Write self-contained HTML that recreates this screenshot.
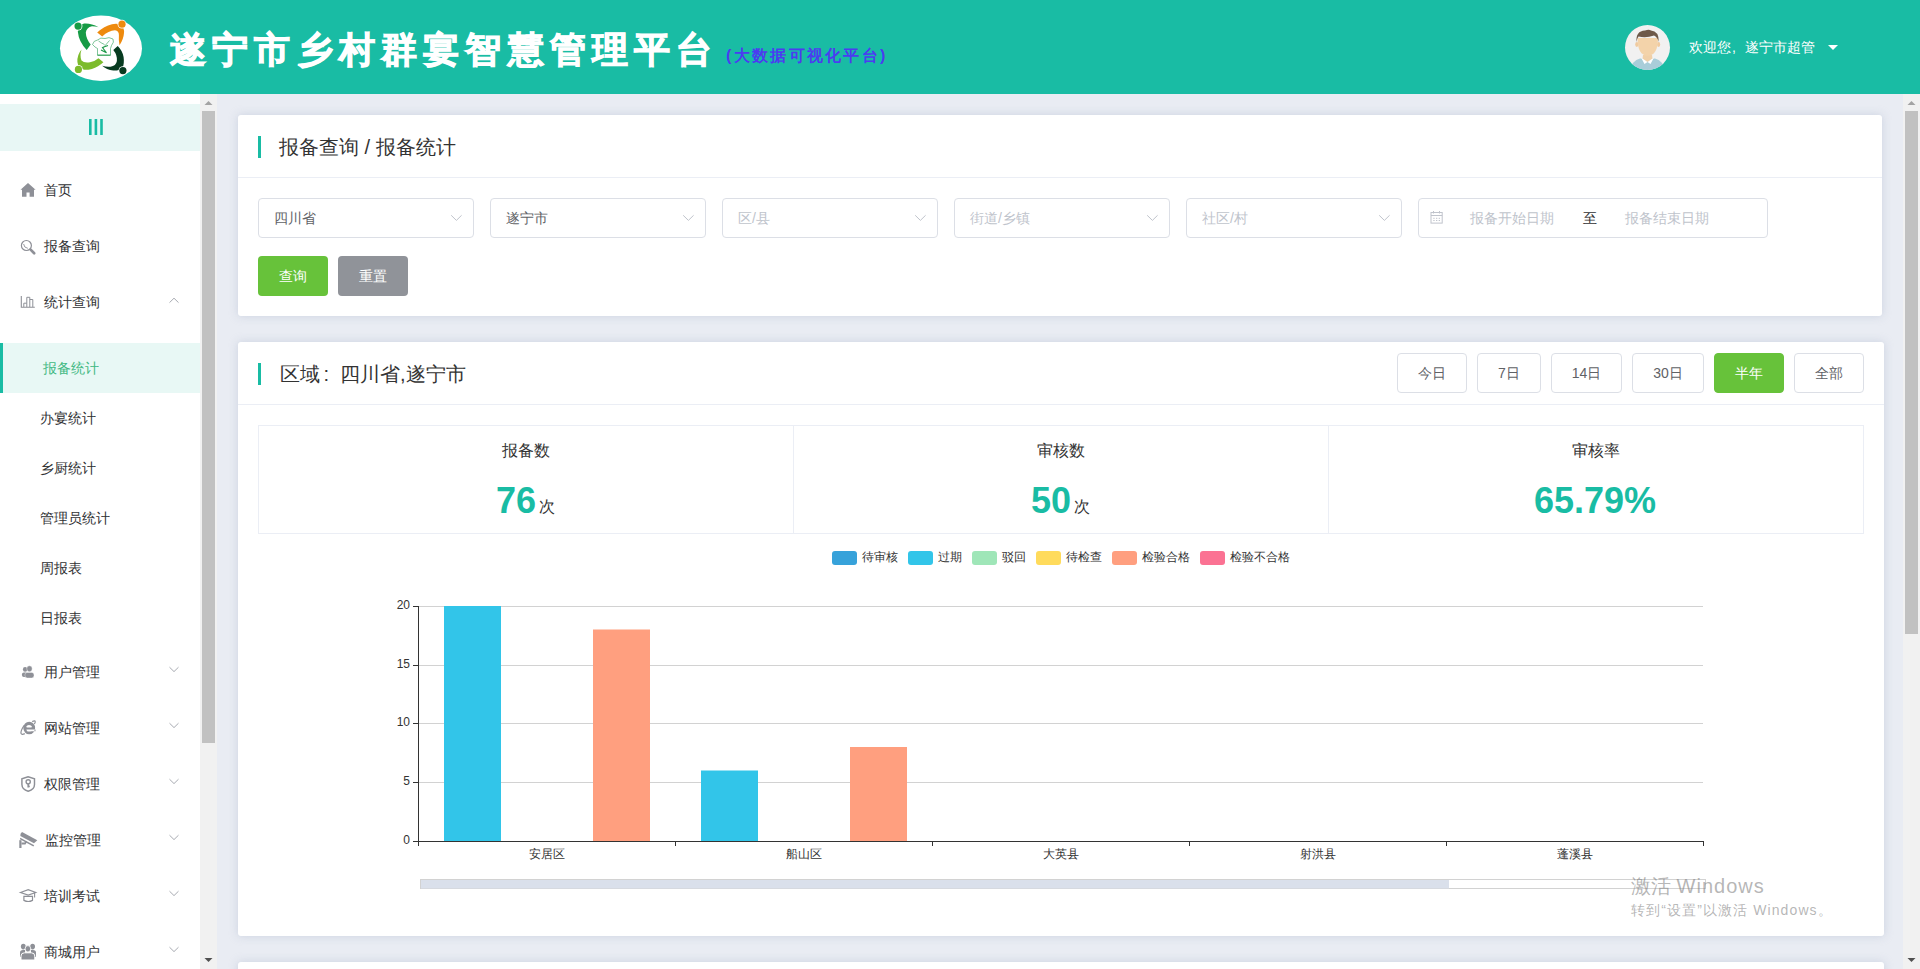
<!DOCTYPE html>
<html><head><meta charset="utf-8">
<style>
*{box-sizing:border-box;margin:0;padding:0}
html,body{width:1920px;height:969px;overflow:hidden}
body{position:relative;background:#e9ecf3;font-family:"Liberation Sans",sans-serif;color:#303133}
.a{position:absolute;white-space:nowrap}
#hdr{left:0;top:0;width:1920px;height:94px;background:#19bca4}
.card{position:absolute;background:#fff;border-radius:3px;box-shadow:0 0 10px rgba(190,198,215,.7)}
.sel{position:absolute;top:198px;width:216px;height:40px;border:1px solid #dcdfe6;border-radius:4px;font-size:14px;line-height:38px;padding-left:15px;color:#c0c4cc;background:#fff}
.sel .chev{position:absolute;right:12px;top:14px;width:8px;height:8px;border-right:1px solid #b4b8bf;border-bottom:1px solid #b4b8bf;transform:rotate(45deg)}
.btn{position:absolute;height:40px;border-radius:4px;font-size:14px;line-height:40px;text-align:center}
.tb{position:absolute;top:353px;height:40px;border:1px solid #dcdfe6;border-radius:4px;font-size:14px;line-height:38px;text-align:center;color:#606266;background:#fff}
.mi{position:absolute;left:44px;font-size:14px;line-height:20px;color:#303133}
.sub{position:absolute;left:40px;font-size:14px;line-height:20px;color:#303133}
.chd{position:absolute;left:171px;width:6px;height:6px;border-right:1px solid #999;border-bottom:1px solid #999;transform:rotate(45deg)}
.ic{position:absolute;left:20px}
</style></head><body>

<!-- HEADER -->
<div id="hdr" class="a">
  <svg class="a" style="left:0;top:0" width="160" height="94" viewBox="0 0 160 94">
  <ellipse cx="101" cy="48.3" rx="41" ry="32.8" fill="#fff"/>
  <path d="M98.5,27.3 Q91,23 84,23.6 Q79.5,25 77.8,31.5 Q78.8,42 86.7,49.9 L90.7,44.6 Q86,38.5 85.8,32.5 Q86.5,27.5 92,26.3 Q95.5,26.3 98.5,27.3 Z" fill="#169b45"/>
  <circle cx="78.05" cy="26.05" r="4.4" fill="#fff"/><circle cx="78.05" cy="26.05" r="3.6" fill="#169b45"/>
  <path d="M97.2,32.6 Q104,26 112,24.2 Q118,23.2 121,25 Q124.5,28 124,33 Q123.5,39.5 119.5,45.2 Q118.5,40 118.9,35 Q119,31 115,30.3 Q108.5,30.5 102.2,36.6 Z" fill="#ee8a0e"/>
  <circle cx="122" cy="24.2" r="4.4" fill="#fff"/><circle cx="122" cy="24.2" r="3.6" fill="#ee8a0e"/>
  <path d="M81.5,49.6 Q77,55 77.4,62 Q78,68 84.2,69.8 Q92,70 98,66.2 Q101,64.5 103.4,62.3 L98.5,58.2 Q94.5,61.5 90,62.3 Q84,63.3 81.5,60.5 Q79.5,56 81.5,49.6 Z" fill="#7cbb2c"/>
  <circle cx="78.4" cy="69.4" r="4.4" fill="#fff"/><circle cx="78.4" cy="69.4" r="3.6" fill="#7cbb2c"/>
  <path d="M113.3,49.9 L117.7,45.9 Q122.5,50.5 123.6,57 Q124.5,63.5 122.5,68 Q119.5,70.8 113.3,70.6 Q106.5,69.5 102.2,65.7 Q106.5,67.2 110.5,66.7 Q116,66 116.9,61 Q117.5,55 113.3,49.9 Z" fill="#073b20"/>
  <circle cx="122.9" cy="70.6" r="4.4" fill="#fff"/><circle cx="122.9" cy="70.6" r="3.6" fill="#073b20"/>
  <g fill="none" stroke="#2a9d55" stroke-width="0.6">
   <path d="M92.5,44.5 Q93.5,40.5 97.5,40 Q100.5,37 105,38.5 Q109,36.5 113,39 Q114.5,42 111.5,45.5 L110.5,48.5 L110.5,55.2 L97.5,55.2 L97.5,48.5 Q95,47.5 92.5,44.5 Z"/>
   <path d="M98.5,41 Q102,43.5 104.5,44.5 M109.5,40.5 Q106.5,44 103,48"/>
  </g>
  <path d="M101,50 L106.5,52.8 L102.5,47.5 L108,45.5" fill="none" stroke="#1f9a4a" stroke-width="1.1"/>
  <path d="M97.5,55.2 L110.5,55.2" stroke="#1f9a4a" stroke-width="0.9"/>
</svg>
  <div class="a" style="left:170px;top:25px;font-size:36px;line-height:50px;font-weight:bold;color:#fff;letter-spacing:6.2px;-webkit-text-stroke:1px #fff">遂宁市乡村群宴智慧管理平台</div>
  <div class="a" style="left:726px;top:44px;font-size:16px;line-height:24px;color:#4b3cf0;letter-spacing:2.3px;font-weight:bold">(大数据可视化平台)</div>
  <svg class="a" style="left:1620px;top:20px" width="56" height="56" viewBox="1620 20 56 56">
  <defs><clipPath id="avc"><circle cx="1647.5" cy="47.5" r="22.5"/></clipPath></defs>
  <circle cx="1647.5" cy="47.5" r="22.5" fill="#f1f1f1"/>
  <g clip-path="url(#avc)">
   <path d="M1630,72 Q1631,61 1640,58.5 L1655,58.5 Q1664,61 1665,72 Z" fill="#a9cdd9"/>
   <path d="M1643,55 L1652,55 L1652.5,59 L1647.5,62 L1642.5,59 Z" fill="#f0d0a8"/>
   <path d="M1641,57.5 L1647.5,62 L1644.5,64 Z M1654,57.5 L1647.5,62 L1650.5,64 Z" fill="#fff"/>
   <ellipse cx="1636.8" cy="44.5" rx="1.6" ry="2.4" fill="#f0cba0"/>
   <ellipse cx="1658.6" cy="44.5" rx="1.6" ry="2.4" fill="#f0cba0"/>
   <path d="M1637.5,38 Q1637.5,55.5 1647.7,55.8 Q1658,55.5 1658,38 Z" fill="#f3d3aa"/>
   <path d="M1636.5,42 Q1635.5,31 1645,30.5 Q1649,29 1651,30.5 Q1659,31 1658.8,42 Q1657.5,37 1654,35.5 Q1646,38.5 1638.5,36.5 Q1637,38.5 1636.5,42 Z" fill="#6e5949"/>
  </g>
</svg>
  <div class="a" style="left:1689px;top:37px;font-size:14px;line-height:20px;color:#fff">欢迎您<span style="display:inline-block;width:14px;padding-left:1px">,</span>遂宁市超管</div>
  <div class="a" style="left:1828px;top:45px;width:0;height:0;border-left:5px solid transparent;border-right:5px solid transparent;border-top:5px solid #fff"></div>
</div>

<!-- SIDEBAR -->
<div class="a" style="left:0;top:94px;width:200px;height:875px;background:#fff">
  <div class="a" style="left:0;top:10px;width:200px;height:47px;background:#e8f7f5"></div>
</div>
<div class="a" style="left:0;top:0;width:200px;height:969px">
  <div class="mi" style="top:180px">首页</div>
  <div class="mi" style="top:236px">报备查询</div>
  <div class="mi" style="top:292px">统计查询</div>
  <div class="a" style="left:0;top:343px;width:200px;height:50px;background:#e8f8f5;border-left:3px solid #19bca4"></div>
  <div class="sub" style="top:358px;left:43px;color:#42b983">报备统计</div>
  <div class="sub" style="top:408px">办宴统计</div>
  <div class="sub" style="top:458px">乡厨统计</div>
  <div class="sub" style="top:508px">管理员统计</div>
  <div class="sub" style="top:558px">周报表</div>
  <div class="sub" style="top:608px">日报表</div>
  <div class="mi" style="top:662px">用户管理</div>
  <div class="mi" style="top:718px">网站管理</div>
  <div class="mi" style="top:774px">权限管理</div>
  <div class="mi" style="top:830px;left:45px">监控管理</div>
  <div class="mi" style="top:886px">培训考试</div>
  <div class="mi" style="top:942px">商城用户</div>
</div>

<!-- SCROLLBARS -->
<div class="a" style="left:200px;top:94px;width:17px;height:875px;background:#f1f1f1">
  <div class="a" style="left:2px;top:17px;width:13px;height:632px;background:#c1c1c1"></div>
</div>
<div class="a" style="left:1903px;top:94px;width:17px;height:875px;background:#f1f1f1">
  <div class="a" style="left:2px;top:17px;width:13px;height:523px;background:#c1c1c1"></div>
</div>


<!-- SIDEBAR ICONS -->
<svg class="a" style="left:0;top:0" width="220" height="969" viewBox="0 0 220 969">
 <g fill="#19bca4"><rect x="89" y="119" width="2.6" height="16"/><rect x="94.6" y="119" width="2.6" height="16"/><rect x="100.2" y="119" width="2.6" height="16"/></g>
 <g fill="#8e9097">
  <!-- home -->
  <path d="M28,183 L20.5,189.7 L22,189.7 L22,196.8 L26.5,196.8 L26.5,192.6 L29.6,192.6 L29.6,196.8 L34,196.8 L34,189.7 L35.6,189.7 Z"/>
  <!-- user -->
  <ellipse cx="25.1" cy="669.4" rx="2.2" ry="2.4"/><rect x="21.9" y="672.4" width="6" height="4.6" rx="2"/>
  <ellipse cx="29.45" cy="668.8" rx="2.7" ry="3" stroke="#fff" stroke-width="0.4"/><rect x="25" y="672.4" width="9" height="5.6" rx="2.3" stroke="#fff" stroke-width="0.4"/>
  <!-- camera -->
  <path d="M22,832 L37.3,840.3 L34,843.3 L20.4,836 Q19.9,833.6 22,832 Z"/>
  <path d="M20.3,837.7 L34.2,845.2 L33.4,846.6 L19.9,839.2 Z"/>
  <rect x="19.3" y="840.2" width="2.2" height="7.8"/>
  <path d="M21.5,842.5 L24.6,842.5 L25.6,840.9 L27.1,841.7 L25.5,844.5 L21.5,844.5 Z"/>
  <!-- users -->
  <ellipse cx="23.3" cy="946.6" rx="2.4" ry="2.8"/><ellipse cx="32.6" cy="946.6" rx="2.4" ry="2.8"/>
  <path d="M20,957 L20,952.5 Q20,950 23,950 L25,950 L25,957 Z"/><path d="M31,950 L33,950 Q36,950 36,952.5 L36,957 L31,957 Z"/>
  <ellipse cx="27.9" cy="948.8" rx="2.8" ry="3.2" stroke="#fff" stroke-width="0.8"/>
  <path d="M21,960 L21,956 Q21,952.8 24.5,952.8 L31.3,952.8 Q34.8,952.8 34.8,956 L34.8,960 Z" stroke="#fff" stroke-width="1"/>
 </g>
 <g fill="none" stroke="#8e9097">
  <!-- search -->
  <circle cx="26.4" cy="245.5" r="5" stroke-width="1.2"/>
  <path d="M30.6,249.6 L34.2,253.2" stroke-width="2.7" stroke-linecap="round"/>
  <path d="M23.6,244 Q24,247.9 27.8,248.3" stroke-width="0.9"/>
  <!-- bar chart -->
  <path d="M21.3,296 L21.3,307.3 L34.8,307.3" stroke-width="1.1"/>
  <path d="M23.8,307 L23.8,303.2 L26.8,303.2 L26.8,307 M26.8,303.2 L26.8,297.3 L29.8,297.3 L29.8,307 M29.8,299.5 L32.8,299.5 L32.8,307" stroke-width="1"/>
  <!-- shield -->
  <path d="M28.2,776.8 L21.9,778.8 L21.9,784.5 Q22,789.5 28.2,791.3 Q34.5,789.5 34.5,784.5 L34.5,778.8 Z" stroke-width="1.45"/>
  <circle cx="28.2" cy="781.8" r="2.1" stroke-width="1.4"/>
  <path d="M28.2,783.8 L28.2,787.6 M28.2,786.4 L29.8,786.4" stroke-width="1.6"/>
  <!-- cap -->
  <path d="M20.5,892.5 L28.2,889.7 L35.7,892.5 L28.2,895 Z" stroke-width="1.2"/>
  <path d="M23.9,896.4 L23.9,900.4 Q28.2,902.6 32.5,900.4 L32.5,896.4 Z" stroke-width="1.2"/>
  <path d="M34.6,892.8 L34.6,897.4" stroke-width="1.1"/>
  <!-- chevrons -->
  <path d="M169.5,302.6 L174,298.2 L178.5,302.6" stroke="#a8abb2" stroke-width="1"/>
  <path d="M169.5,667.2 L174,671.6 L178.5,667.2" stroke="#a8abb2" stroke-width="1"/>
  <path d="M169.5,723.2 L174,727.6 L178.5,723.2" stroke="#a8abb2" stroke-width="1"/>
  <path d="M169.5,779.2 L174,783.6 L178.5,779.2" stroke="#a8abb2" stroke-width="1"/>
  <path d="M169.5,835.2 L174,839.6 L178.5,835.2" stroke="#a8abb2" stroke-width="1"/>
  <path d="M169.5,891.2 L174,895.6 L178.5,891.2" stroke="#a8abb2" stroke-width="1"/>
  <path d="M169.5,947.2 L174,951.6 L178.5,947.2" stroke="#a8abb2" stroke-width="1"/>
 </g>
 <!-- IE -->
 <path fill="#8e9097" fill-rule="evenodd" d="M23.3,728 a5.9,6.3 0 1,0 11.8,0 a5.9,6.3 0 1,0 -11.8,0 Z M26.3,726.6 Q26.8,725 29,725 Q31.5,725 31.9,726.6 Q31.9,727.4 31.4,727.4 L26.8,727.4 Q26.3,727.4 26.3,726.6 Z M26.4,729.6 L35.5,729.6 L35.5,731.2 L31.8,731.2 Q29,731.8 27.6,731.4 Q26.4,730.8 26.4,729.6 Z"/>
 <g fill="none" stroke="#8e9097" stroke-width="1.2">
  <path d="M32.2,721.6 Q35.5,720 35.2,722.2 Q35,723.2 34.3,724"/>
  <path d="M24,725.5 Q20.8,730.5 20.9,733.2 Q21.5,735.3 24.8,733.6"/>
 </g>
 <!-- scrollbar arrows -->
 <path d="M204.5,105 L208.5,101 L212.5,105 Z" fill="#a3a3a3"/>
 <path d="M204.5,958 L208.5,962 L212.5,958 Z" fill="#505050"/>
</svg>
<svg class="a" style="left:1903px;top:0" width="17" height="969" viewBox="1903 0 17 969">
 <path d="M1907.5,105 L1911.5,101 L1915.5,105 Z" fill="#a3a3a3"/>
 <path d="M1907.5,958 L1911.5,962 L1915.5,958 Z" fill="#505050"/>
</svg>

<!-- CARD 1 -->
<div class="card" style="left:238px;top:115px;width:1644px;height:201px"></div>
<div class="a" style="left:258px;top:136px;width:3px;height:22px;background:#19bca4"></div>
<div class="a" style="left:279px;top:135px;font-size:20px;line-height:24px;color:#333">报备查询 / 报备统计</div>
<div class="a" style="left:238px;top:177px;width:1644px;height:1px;background:#ebeef5"></div>
<div class="sel" style="left:258px;color:#606266">四川省</div>
<div class="sel" style="left:490px;color:#606266">遂宁市</div>
<div class="sel" style="left:722px">区/县</div>
<div class="sel" style="left:954px">街道/乡镇</div>
<div class="sel" style="left:1186px">社区/村</div>
<div class="sel" style="left:1418px;width:350px;padding:0"></div>
<div class="a" style="left:1470px;top:208px;font-size:14px;line-height:20px;color:#c0c4cc">报备开始日期</div>
<div class="a" style="left:1583px;top:208px;font-size:14px;line-height:20px;color:#303133">至</div>
<div class="a" style="left:1625px;top:208px;font-size:14px;line-height:20px;color:#c0c4cc">报备结束日期</div>
<svg class="a" style="left:0;top:0" width="1920" height="300" viewBox="0 0 1920 300">
 <g fill="none" stroke="#c0c4cc" stroke-width="1"><path d="M451.2,215.3 L456.4,220.4 L461.6,215.3"/><path d="M683.2,215.3 L688.4,220.4 L693.6,215.3"/><path d="M915.2,215.3 L920.4,220.4 L925.6,215.3"/><path d="M1147.2,215.3 L1152.4,220.4 L1157.6,215.3"/><path d="M1379.2,215.3 L1384.4,220.4 L1389.6,215.3"/></g>
 <g fill="none" stroke="#c0c4cc" stroke-width="1">
  <rect x="1431" y="212.5" width="11.2" height="10.6"/>
  <line x1="1431" y1="215.5" x2="1442.2" y2="215.5"/>
  <line x1="1433.5" y1="211" x2="1433.5" y2="213.5"/>
  <line x1="1439.5" y1="211" x2="1439.5" y2="213.5"/>
 </g>
 <g fill="#c0c4cc">
  <rect x="1433.3" y="217.8" width="1.3" height="1"/><rect x="1436" y="217.8" width="1.3" height="1"/><rect x="1438.7" y="217.8" width="1.3" height="1"/>
  <rect x="1433.3" y="220" width="1.3" height="1"/><rect x="1436" y="220" width="1.3" height="1"/><rect x="1438.7" y="220" width="1.3" height="1"/>
 </g>
</svg>
<div class="btn" style="left:258px;top:256px;width:70px;background:#67c23a;color:#fff">查询</div>
<div class="btn" style="left:338px;top:256px;width:70px;background:#909399;color:#fff">重置</div>

<!-- CARD 2 -->
<div class="card" style="left:238px;top:342px;width:1646px;height:594px"></div>
<div class="a" style="left:258px;top:363px;width:3px;height:22px;background:#19bca4"></div>
<div class="a" style="left:280px;top:362px;font-size:20px;line-height:24px;color:#333">区域<span style="display:inline-block;width:20px;padding-left:3.5px">:</span>四川省,遂宁市</div>
<div class="a" style="left:238px;top:404px;width:1646px;height:1px;background:#ebeef5"></div>
<div class="tb" style="left:1397px;width:70px">今日</div>
<div class="tb" style="left:1477px;width:64px">7日</div>
<div class="tb" style="left:1551px;width:71px">14日</div>
<div class="tb" style="left:1632px;width:72px">30日</div>
<div class="tb" style="left:1714px;width:70px;background:#67c23a;border-color:#67c23a;color:#fff">半年</div>
<div class="tb" style="left:1794px;width:70px">全部</div>

<div class="a" style="left:258px;top:425px;width:1606px;height:109px;border:1px solid #ebeef5"></div>
<div class="a" style="left:793px;top:425px;width:1px;height:109px;background:#ebeef5"></div>
<div class="a" style="left:1328px;top:425px;width:1px;height:109px;background:#ebeef5"></div>


<!-- STATS -->
<div class="a" style="left:502px;top:440px;font-size:16px;line-height:22px;color:#333">报备数</div>
<div class="a" style="left:496px;top:481px;font-size:36px;line-height:40px;font-weight:bold;color:#19bca4">76</div>
<div class="a" style="left:539px;top:496px;font-size:16px;line-height:22px;color:#333">次</div>
<div class="a" style="left:1037px;top:440px;font-size:16px;line-height:22px;color:#333">审核数</div>
<div class="a" style="left:1031px;top:481px;font-size:36px;line-height:40px;font-weight:bold;color:#19bca4">50</div>
<div class="a" style="left:1074px;top:496px;font-size:16px;line-height:22px;color:#333">次</div>
<div class="a" style="left:1572px;top:440px;font-size:16px;line-height:22px;color:#333">审核率</div>
<div class="a" style="left:1534px;top:481px;font-size:36px;line-height:40px;font-weight:bold;color:#19bca4">65.79%</div>

<!-- LEGEND -->
<div class="a" style="left:832px;top:551px;width:25px;height:14px;border-radius:3px;background:#37a2da"></div>
<div class="a" style="left:862px;top:549px;font-size:12px;line-height:16px;color:#333">待审核</div>
<div class="a" style="left:908px;top:551px;width:25px;height:14px;border-radius:3px;background:#32c5e9"></div>
<div class="a" style="left:938px;top:549px;font-size:12px;line-height:16px;color:#333">过期</div>
<div class="a" style="left:972px;top:551px;width:25px;height:14px;border-radius:3px;background:#9fe6b8"></div>
<div class="a" style="left:1002px;top:549px;font-size:12px;line-height:16px;color:#333">驳回</div>
<div class="a" style="left:1036px;top:551px;width:25px;height:14px;border-radius:3px;background:#ffdb5c"></div>
<div class="a" style="left:1066px;top:549px;font-size:12px;line-height:16px;color:#333">待检查</div>
<div class="a" style="left:1112px;top:551px;width:25px;height:14px;border-radius:3px;background:#ff9f7f"></div>
<div class="a" style="left:1142px;top:549px;font-size:12px;line-height:16px;color:#333">检验合格</div>
<div class="a" style="left:1200px;top:551px;width:25px;height:14px;border-radius:3px;background:#fb7293"></div>
<div class="a" style="left:1230px;top:549px;font-size:12px;line-height:16px;color:#333">检验不合格</div>

<!-- CHART -->
<svg class="a" style="left:0;top:0" width="1920" height="969" viewBox="0 0 1920 969">
 <g stroke="#d2d2d2" stroke-width="1">
  <line x1="418" y1="606.5" x2="1703" y2="606.5"/>
  <line x1="418" y1="665.5" x2="1703" y2="665.5"/>
  <line x1="418" y1="723.5" x2="1703" y2="723.5"/>
  <line x1="418" y1="782.5" x2="1703" y2="782.5"/>
 </g>
 <rect x="444" y="606" width="57" height="235" fill="#32c5e9"/>
 <rect x="593" y="629.5" width="57" height="211.5" fill="#ff9f7f"/>
 <rect x="701" y="770.5" width="57" height="70.5" fill="#32c5e9"/>
 <rect x="850" y="747" width="57" height="94" fill="#ff9f7f"/>
 <g stroke="#333" stroke-width="1" fill="none">
  <line x1="418.5" y1="606" x2="418.5" y2="841"/>
  <line x1="413" y1="606.5" x2="418" y2="606.5"/>
  <line x1="413" y1="665.5" x2="418" y2="665.5"/>
  <line x1="413" y1="723.5" x2="418" y2="723.5"/>
  <line x1="413" y1="782.5" x2="418" y2="782.5"/>
  <line x1="413" y1="841.5" x2="1703" y2="841.5"/>
  <line x1="418.5" y1="841" x2="418.5" y2="846"/>
  <line x1="675.5" y1="841" x2="675.5" y2="846"/>
  <line x1="932.5" y1="841" x2="932.5" y2="846"/>
  <line x1="1189.5" y1="841" x2="1189.5" y2="846"/>
  <line x1="1446.5" y1="841" x2="1446.5" y2="846"/>
  <line x1="1703.5" y1="841" x2="1703.5" y2="846"/>
 </g>
 <g font-family="Liberation Sans, sans-serif" font-size="12" fill="#333" text-anchor="end">
  <text x="410" y="609">20</text>
  <text x="410" y="668">15</text>
  <text x="410" y="726">10</text>
  <text x="410" y="785">5</text>
  <text x="410" y="844">0</text>
 </g>
 <g font-family="Liberation Sans, sans-serif" font-size="12" fill="#333" text-anchor="middle">
  <text x="546.5" y="858">安居区</text>
  <text x="803.5" y="858">船山区</text>
  <text x="1060.5" y="858">大英县</text>
  <text x="1317.5" y="858">射洪县</text>
  <text x="1574.5" y="858">蓬溪县</text>
 </g>
 <rect x="420.5" y="879.5" width="1285" height="9" fill="none" stroke="#d2d2d2"/>
 <rect x="421" y="880" width="1028" height="8.5" fill="#dae0eb"/>
</svg>

<!-- WATERMARK -->
<div class="a" style="left:1631px;top:873px;font-size:20px;line-height:26px;color:rgba(120,120,120,.55)">激活 <span style="letter-spacing:1px">Windows</span></div>
<div class="a" style="left:1631px;top:900px;font-size:14px;line-height:20px;color:rgba(120,120,120,.55);letter-spacing:1.1px">转到“设置”以激活 Windows。</div>

<!-- CARD 3 top -->
<div class="card" style="left:238px;top:962px;width:1646px;height:40px"></div>

</body></html>
